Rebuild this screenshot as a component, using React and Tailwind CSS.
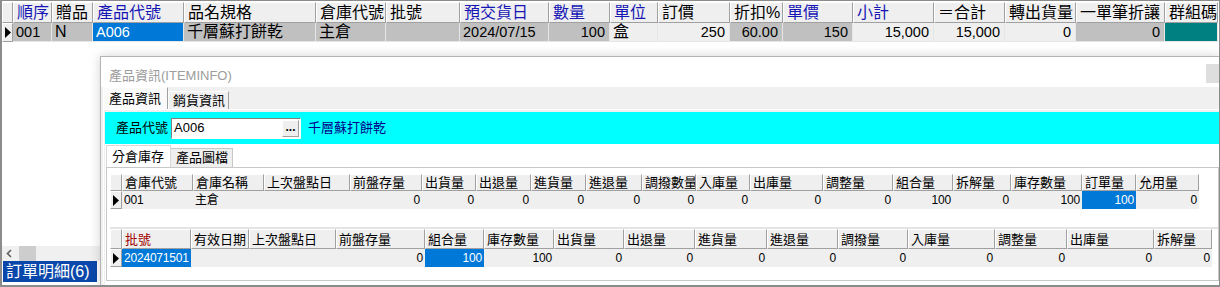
import React from 'react'

const FONT = "font-['Liberation_Sans','Noto_Sans_CJK_TC',sans-serif]"
const RAISED =
  'border-t border-l border-r border-b border-t-white border-l-white border-r-[#a0a0a0] border-b-[#a0a0a0]'
const GRAY = 'bg-[#c0c0c0]'
const LIGHT = 'bg-[#efefef]'
const SEL = 'bg-[#0078d7] text-white'
const BLUE = 'text-[#1616b4]'

const mainCols = [
  { h: '順序', w: 'w-[39px]', c: BLUE, v: '001', bg: GRAY, n: true },
  { h: '贈品', w: 'w-[41px]', v: 'N', bg: GRAY },
  { h: '產品代號', w: 'w-[91px]', c: BLUE, v: 'A006', bg: SEL, n: true },
  { h: '品名規格', w: 'w-[132px]', v: '千層蘇打餅乾', bg: GRAY },
  { h: '倉庫代號', w: 'w-[70px]', v: '主倉', bg: GRAY },
  { h: '批號', w: 'w-[74px]', v: '', bg: GRAY },
  { h: '預交貨日', w: 'w-[89px]', c: BLUE, v: '2024/07/15', bg: GRAY, n: true },
  { h: '數量', w: 'w-[61px]', c: BLUE, v: '100', r: true, bg: GRAY, n: true },
  { h: '單位', w: 'w-[48px]', c: BLUE, v: '盒', bg: LIGHT },
  { h: '訂價', w: 'w-[72px]', v: '250', r: true, bg: LIGHT, n: true },
  { h: '折扣%', w: 'w-[53px]', v: '60.00', r: true, bg: GRAY, n: true },
  { h: '單價', w: 'w-[70px]', c: BLUE, v: '150', r: true, bg: GRAY, n: true },
  { h: '小計', w: 'w-[81px]', c: BLUE, v: '15,000', r: true, bg: LIGHT, n: true },
  { h: '＝合計', w: 'w-[71px]', v: '15,000', r: true, bg: LIGHT, n: true },
  { h: '轉出貨量', w: 'w-[71px]', v: '0', r: true, bg: LIGHT, n: true },
  { h: '一單筆折讓', w: 'w-[89px]', v: '0', r: true, bg: GRAY, n: true },
  { h: '群組碼', w: 'w-[53px]', v: '', bg: 'bg-[#008080]' },
]

const stockCols = [
  { h: '倉庫代號', w: 'w-[71px]', v: '001' },
  { h: '倉庫名稱', w: 'w-[71px]', v: '主倉' },
  { h: '上次盤點日', w: 'w-[86px]', v: '' },
  { h: '前盤存量', w: 'w-[72px]', v: '0', r: true },
  { h: '出貨量', w: 'w-[54px]', v: '0', r: true },
  { h: '出退量', w: 'w-[55px]', v: '0', r: true },
  { h: '進貨量', w: 'w-[55px]', v: '0', r: true },
  { h: '進退量', w: 'w-[56px]', v: '0', r: true },
  { h: '調撥數量', w: 'w-[54px]', v: '0', r: true },
  { h: '入庫量', w: 'w-[54px]', v: '0', r: true },
  { h: '出庫量', w: 'w-[73px]', v: '0', r: true },
  { h: '調整量', w: 'w-[70px]', v: '0', r: true },
  { h: '組合量', w: 'w-[60px]', v: '100', r: true },
  { h: '拆解量', w: 'w-[58px]', v: '0', r: true },
  { h: '庫存數量', w: 'w-[71px]', v: '100', r: true },
  { h: '訂單量', w: 'w-[54px]', v: '100', r: true, sel: true },
  { h: '允用量', w: 'w-[63px]', v: '0', r: true },
]

const lotCols = [
  { h: '批號', w: 'w-[69px]', v: '2024071501', c: 'text-[#a00000]', sel: true },
  { h: '有效日期', w: 'w-[58px]', v: '' },
  { h: '上次盤點日', w: 'w-[87px]', v: '' },
  { h: '前盤存量', w: 'w-[89px]', v: '0', r: true },
  { h: '組合量', w: 'w-[59px]', v: '100', r: true, sel: true },
  { h: '庫存數量', w: 'w-[70px]', v: '100', r: true },
  { h: '出貨量', w: 'w-[70px]', v: '0', r: true },
  { h: '出退量', w: 'w-[71px]', v: '0', r: true },
  { h: '進貨量', w: 'w-[72px]', v: '0', r: true },
  { h: '進退量', w: 'w-[71px]', v: '0', r: true },
  { h: '調撥量', w: 'w-[70px]', v: '0', r: true },
  { h: '入庫量', w: 'w-[87px]', v: '0', r: true },
  { h: '調整量', w: 'w-[72px]', v: '0', r: true },
  { h: '出庫量', w: 'w-[87px]', v: '0', r: true },
  { h: '拆解量', w: 'w-[58px]', v: '0', r: true },
]

function Arrow() {
  return (
    <svg width="6" height="11" viewBox="0 0 6 11">
      <polygon points="0,0 6,5.5 0,11" fill="#000" />
    </svg>
  )
}

function MainGrid() {
  return (
    <div className="flex flex-col text-[16px] leading-none">
      <div className="flex h-[21px]">
        <div className={`w-[11px] shrink-0 bg-[#efefef] ${RAISED}`} />
        {mainCols.map((c) => (
          <div
            key={c.h}
            className={`${c.w} shrink-0 flex items-center pl-[3px] whitespace-nowrap overflow-hidden bg-[#efefef] ${RAISED} ${c.c || 'text-black'}`}
          >
            {c.h}
          </div>
        ))}
      </div>
      <div className="flex h-[19px]">
        <div className={`w-[11px] shrink-0 flex items-center justify-center bg-[#efefef] ${RAISED}`}>
          <Arrow />
        </div>
        {mainCols.map((c) => (
          <div
            key={c.h}
            className={`${c.w} shrink-0 flex items-center whitespace-nowrap overflow-hidden border-r border-b border-[#e6e6e6] ${c.bg} ${c.n ? 'text-[14.5px]' : ''} ${c.r ? 'justify-end pr-[4px]' : 'pl-[3px]'}`}
          >
            {c.v}
          </div>
        ))}
      </div>
    </div>
  )
}

function SubGrid({ cols, headH }) {
  return (
    <div className="flex flex-col text-[13px] leading-none">
      <div className={`flex ${headH}`}>
        <div className={`w-[12px] shrink-0 bg-[#efefef] ${RAISED}`} />
        {cols.map((c) => (
          <div
            key={c.h}
            className={`${c.w} shrink-0 flex items-center pl-[2px] whitespace-nowrap overflow-hidden bg-[#efefef] ${RAISED} ${c.c || 'text-black'}`}
          >
            {c.h}
          </div>
        ))}
      </div>
      <div className="flex h-[18px]">
        <div className={`w-[12px] shrink-0 flex items-center justify-center bg-[#efefef] ${RAISED}`}>
          <Arrow />
        </div>
        {cols.map((c) => (
          <div
            key={c.h}
            className={`${c.w} shrink-0 flex items-center whitespace-nowrap overflow-hidden text-[12px] tracking-[-0.2px] ${c.sel ? SEL : 'bg-[#efefef]'} ${c.r ? 'justify-end pr-[2px]' : 'pl-[2px]'}`}
          >
            {c.v}
          </div>
        ))}
      </div>
    </div>
  )
}

function ItemInfo() {
  return (
    <div className="absolute left-[98px] top-[55px] w-[1120px] bottom-0 flex flex-col shadow-[0_0_10px_rgba(0,0,0,0.18)] border-t border-l border-[#b4b4b4] text-[13px]">
      <div className="h-[30px] shrink-0 bg-white flex items-start justify-between">
        <span className="pl-[8px] pt-[9px] text-[#9c9c9c]">產品資訊(ITEMINFO)</span>
        <div className="mt-[7px] w-[14px] h-[19px] bg-[#dedede]" />
      </div>
      <div className="flex-1 bg-[#f0f0f0] pl-[2px] flex flex-col">
        <div className="h-[22px] shrink-0 flex items-end">
          <div className="w-[65px] h-[22px] bg-[#fafafa] border-t border-l border-r border-t-white border-l-white border-r-[#a0a0a0] flex items-center pl-[5px]">
            產品資訊
          </div>
          <div className={`w-[61px] h-[18px] flex items-center pl-[4px] ${RAISED} border-b-0`}>銷貨資訊</div>
        </div>
        <div className="flex-1 border-t border-l border-white pl-[1px] pt-[2px] flex flex-col">
          <div className="h-[32px] shrink-0 bg-[#00ffff] flex items-center pl-[11px]">
            <span>產品代號</span>
            <div className="ml-[3px] w-[130px] h-[21px] bg-white border-t border-l border-[#808080] border-r border-b border-r-white border-b-white flex items-center">
              <span className="pl-[2px]">A006</span>
              <div className={`ml-auto mr-[1px] w-[17px] h-[17px] bg-[#efefef] ${RAISED} flex items-center justify-center text-[12px] font-bold leading-none pb-[3px]`}>
                ...
              </div>
            </div>
            <span className="ml-[7px] text-[#000088]">千層蘇打餅乾</span>
          </div>
          <div className="flex-1 bg-white pl-[1px] pr-[1px] pb-[4px] flex flex-col">
            <div className="h-[23px] shrink-0 flex items-end">
              <div className="w-[65px] h-[22px] bg-white border-t border-l border-r border-[#d8d8d8] border-b-0 flex items-center pl-[5px]">
                分倉庫存
              </div>
              <div className="w-[62px] h-[19px] bg-[#efefef] border-t border-r border-[#c8c8c8] flex items-center pl-[5px]">
                產品圖檔
              </div>
            </div>
            <div className="flex-1 border border-[#c8c8c8] pl-[3px] pt-[6px] flex flex-col">
              <SubGrid cols={stockCols} headH="h-[17px]" />
              <div className="mt-[18px] h-[2px] bg-[#e4e4e4]" />
              <SubGrid cols={lotCols} headH="h-[20px]" />
            </div>
          </div>
        </div>
      </div>
    </div>
  )
}

export default function App() {
  return (
    <div
      className={`relative w-[1220px] h-[287px] bg-white border-t border-l-2 border-r border-b-2 border-[#8c8c8c] flex flex-col pt-[1px] pb-[3px] overflow-hidden ${FONT}`}
    >
      <MainGrid />
      <div className="flex-1" />
      <div className="h-[15px] shrink-0 bg-[#f0f0f0] flex items-center">
        <div className="w-[15px] h-full flex items-center justify-center">
          <svg width="7" height="9" viewBox="0 0 7 9">
            <polyline points="5,1 1.5,4.5 5,8" fill="none" stroke="#606060" strokeWidth="1.6" />
          </svg>
        </div>
        <div className="ml-[2px] w-[17px] h-full bg-[#cdcdcd]" />
      </div>
      <div className="h-[21px] shrink-0 flex">
        <div className="ml-[1px] w-[94px] h-full bg-[#0a47aa] text-white text-[16px] leading-none flex items-center pl-[3px] whitespace-nowrap">
          訂單明細(6)
        </div>
      </div>
      <ItemInfo />
    </div>
  )
}
